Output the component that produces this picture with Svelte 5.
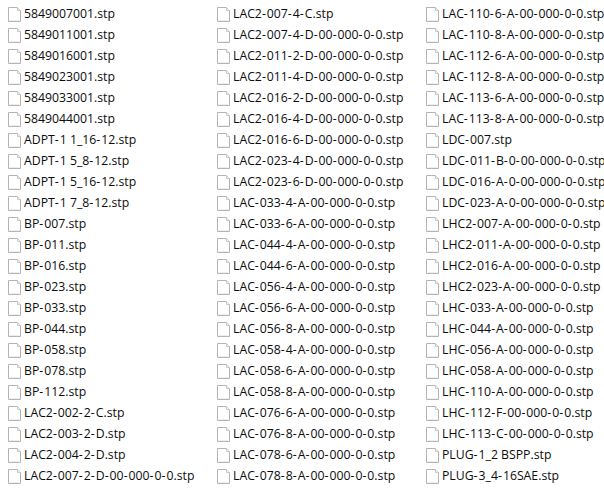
<script>
  const columns = [
    [
      '5849007001.stp', '5849011001.stp', '5849016001.stp', '5849023001.stp', '5849033001.stp', '5849044001.stp',
      'ADPT-1 1_16-12.stp', 'ADPT-1 5_8-12.stp', 'ADPT-1 5_16-12.stp', 'ADPT-1 7_8-12.stp',
      'BP-007.stp', 'BP-011.stp', 'BP-016.stp', 'BP-023.stp', 'BP-033.stp', 'BP-044.stp', 'BP-058.stp', 'BP-078.stp', 'BP-112.stp',
      'LAC2-002-2-C.stp', 'LAC2-003-2-D.stp', 'LAC2-004-2-D.stp', 'LAC2-007-2-D-00-000-0-0.stp'
    ],
    [
      'LAC2-007-4-C.stp', 'LAC2-007-4-D-00-000-0-0.stp', 'LAC2-011-2-D-00-000-0-0.stp', 'LAC2-011-4-D-00-000-0-0.stp',
      'LAC2-016-2-D-00-000-0-0.stp', 'LAC2-016-4-D-00-000-0-0.stp', 'LAC2-016-6-D-00-000-0-0.stp',
      'LAC2-023-4-D-00-000-0-0.stp', 'LAC2-023-6-D-00-000-0-0.stp',
      'LAC-033-4-A-00-000-0-0.stp', 'LAC-033-6-A-00-000-0-0.stp', 'LAC-044-4-A-00-000-0-0.stp', 'LAC-044-6-A-00-000-0-0.stp',
      'LAC-056-4-A-00-000-0-0.stp', 'LAC-056-6-A-00-000-0-0.stp', 'LAC-056-8-A-00-000-0-0.stp',
      'LAC-058-4-A-00-000-0-0.stp', 'LAC-058-6-A-00-000-0-0.stp', 'LAC-058-8-A-00-000-0-0.stp',
      'LAC-076-6-A-00-000-0-0.stp', 'LAC-076-8-A-00-000-0-0.stp', 'LAC-078-6-A-00-000-0-0.stp', 'LAC-078-8-A-00-000-0-0.stp'
    ],
    [
      'LAC-110-6-A-00-000-0-0.stp', 'LAC-110-8-A-00-000-0-0.stp', 'LAC-112-6-A-00-000-0-0.stp', 'LAC-112-8-A-00-000-0-0.stp',
      'LAC-113-6-A-00-000-0-0.stp', 'LAC-113-8-A-00-000-0-0.stp', 'LDC-007.stp',
      'LDC-011-B-0-00-000-0-0.stp', 'LDC-016-A-0-00-000-0-0.stp', 'LDC-023-A-0-00-000-0-0.stp',
      'LHC2-007-A-00-000-0-0.stp', 'LHC2-011-A-00-000-0-0.stp', 'LHC2-016-A-00-000-0-0.stp', 'LHC2-023-A-00-000-0-0.stp',
      'LHC-033-A-00-000-0-0.stp', 'LHC-044-A-00-000-0-0.stp', 'LHC-056-A-00-000-0-0.stp', 'LHC-058-A-00-000-0-0.stp',
      'LHC-110-A-00-000-0-0.stp', 'LHC-112-F-00-000-0-0.stp', 'LHC-113-C-00-000-0-0.stp',
      'PLUG-1_2 BSPP.stp', 'PLUG-3_4-16SAE.stp'
    ]
  ]

  // hyphens are wider in the original font, so they get their own span
  const nameParts = (name) => name.split(/(-)/)
</script>

<div class="file-list">
  {#each columns as files}
    <ul class="column">
      {#each files as name}
        <li class="file">
          <svg class="file-icon" width="13" height="15" viewBox="0 0 13 15">
            <path d="M0.5 0.5H9.5L12.5 3.5V14.5H0.5Z" fill="#fff" stroke="#b4b4b4" />
            <path d="M9.5 0.5V3.5H12.5" fill="#f4f4f4" stroke="#c8c8c8" />
            <path d="M1.5 13.5H11.5" stroke="#eeeeee" />
          </svg>
          <span class="file-name">{#each nameParts(name) as part}{#if part === '-'}<span class="hyphen">-</span>{:else}{part}{/if}{/each}</span>
        </li>
      {/each}
    </ul>
  {/each}
</div>

<style>
  :global(body) {
    margin: 0;
    background: #fff;
    overflow: hidden;
  }

  .file-list {
    display: grid;
    grid-template-columns: 209px 209px 186px;
    width: 604px;
    height: 490px;
    padding-top: 4px;
    box-sizing: border-box;
    overflow: hidden;
    font-family: "Open Sans", "Noto Sans", sans-serif;
    font-size: 12.25px;
    color: #0c0c0c;
  }

  .column {
    list-style: none;
    margin: 0;
    padding: 0 0 0 8px;
    overflow: hidden;
  }

  .file {
    display: flex;
    align-items: center;
    gap: 3px;
    height: 21px;
    white-space: nowrap;
  }

  .file-icon {
    flex: none;
  }

  .file-name {
    margin-bottom: 2px;
  }

  .hyphen {
    letter-spacing: 1px;
  }
</style>
